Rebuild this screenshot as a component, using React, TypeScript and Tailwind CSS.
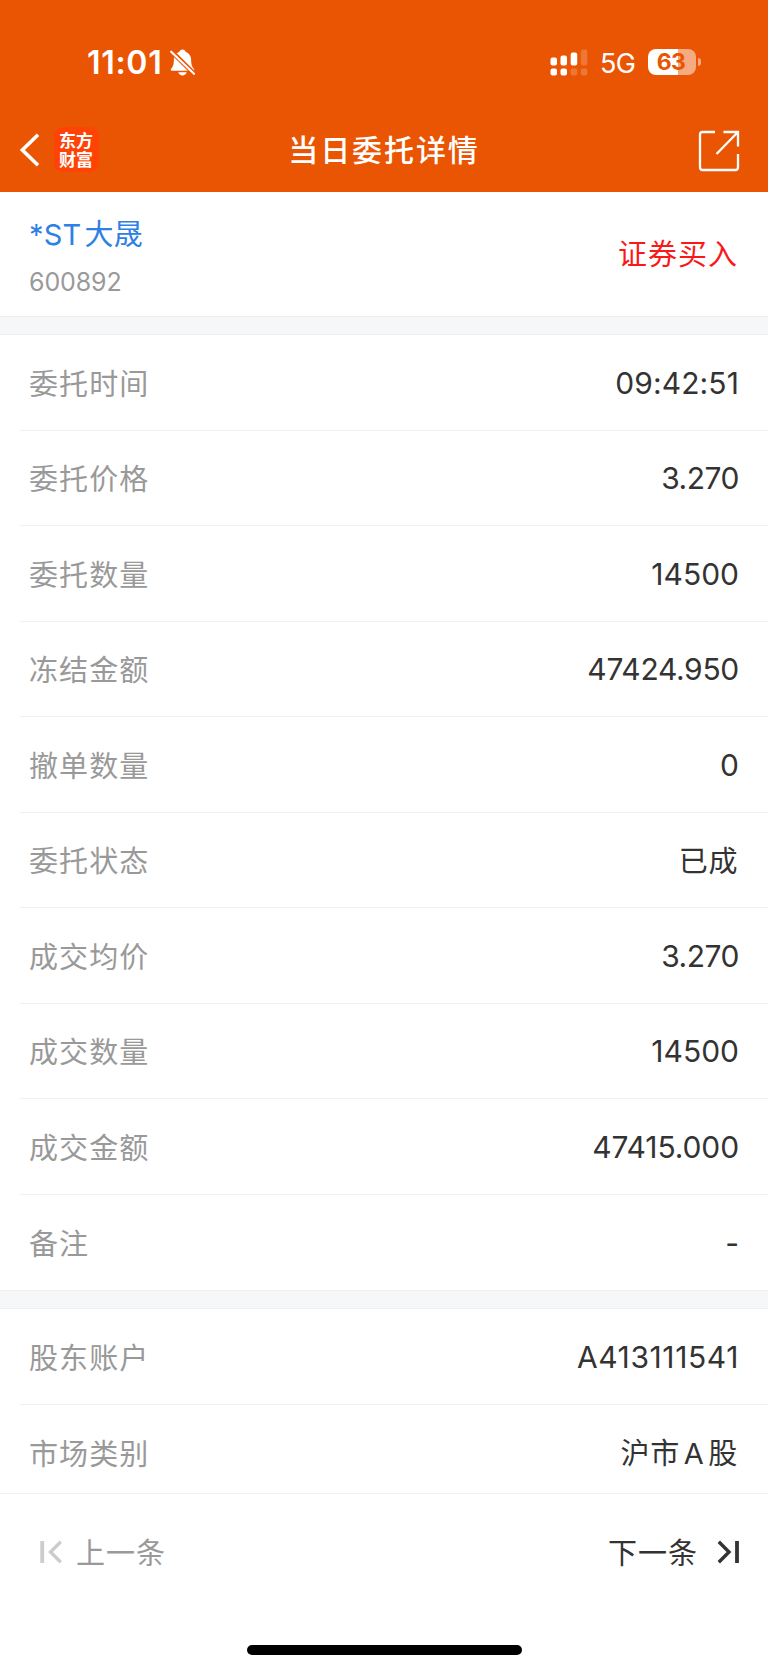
const CJK = 'font-["Inter","Noto_Sans_CJK_SC",sans-serif]';

type Detail = { label: string; value: string; spacing?: string };

const orderDetails: Detail[] = [
  { label: '委托时间', value: '09:42:51', spacing: 'tracking-[0.1px]' },
  { label: '委托价格', value: '3.270', spacing: 'tracking-[-0.5px]' },
  { label: '委托数量', value: '14500', spacing: 'tracking-[0px]' },
  { label: '冻结金额', value: '47424.950', spacing: 'tracking-[-0.3px]' },
  { label: '撤单数量', value: '0', spacing: 'tracking-[0px]' },
  { label: '委托状态', value: '已成', spacing: 'tracking-[0.6px]' },
  { label: '成交均价', value: '3.270', spacing: 'tracking-[-0.5px]' },
  { label: '成交数量', value: '14500', spacing: 'tracking-[0px]' },
  { label: '成交金额', value: '47415.000', spacing: 'tracking-[-0.1px]' },
  { label: '备注', value: '-' },
];

const accountDetails: Detail[] = [
  { label: '股东账户', value: 'A413111541', spacing: 'tracking-[0.6px]' },
  { label: '市场类别', value: '沪市 A 股', spacing: 'tracking-[0.7px]' },
];

function Row({ label, value, spacing = '', last }: Detail & { last?: boolean }) {
  const isCjk = /[\u4e00-\u9fff]/.test(value);
  return (
    <div className="h-[95.5px] shrink-0 pl-5">
      <div
        className={`flex h-full items-center justify-between pl-[9px] pt-[3px] leading-none ${
          isCjk ? 'pr-[30px]' : 'pr-[29px]'
        } ${last ? '' : 'border-b border-[#f0f0f1]'}`}
      >
        <span className="pt-px text-[29px] tracking-[1.1px] text-[#999999]">{label}</span>
        <span
          className={`text-[#333333] ${
            isCjk ? 'text-[29px] [word-spacing:-5px]' : 'pb-[2px] text-[30px]'
          } ${spacing}`}
        >
          {value}
        </span>
      </div>
    </div>
  );
}

function Divider() {
  return <div className="h-[19px] shrink-0 border-y border-[#efeff0] bg-[#f6f7f9]" />;
}

function SilentBell() {
  return (
    <svg width="25" height="27" viewBox="0 0 26 28" fill="none">
      <path
        d="M13 .5c-1.700 0-3 .9-3.400 2.500C5.800 4.300 4 7.700 4 11.500c0 5-.8 6.600-2.600 8.700C.3 21.600.6 22.500 2 22.500h22c1.400 0 1.700-.9.6-2.300-1.800-2.100-2.600-3.700-2.600-8.700 0-3.800-1.800-7.200-5.600-8.500C16 1.400 14.700.5 13 .5Z"
        fill="white"
      />
      <path d="M8.600 24.200h8.800c-.6 2-2.300 3.300-4.400 3.300s-3.800-1.300-4.400-3.300Z" fill="white" />
      <path d="M1.600 2.500 25.200 25.800" stroke="#ea5504" strokeWidth="5" />
      <path d="M1.200 2.700 25 25.800" stroke="white" strokeWidth="2.200" strokeLinecap="round" />
    </svg>
  );
}

function Signal() {
  return (
    <svg className="mt-px" width="38" height="28" viewBox="0 0 38 28" fill="white">
      <rect x="0.500" y="8.500" width="6.500" height="8" rx="2" />
      <rect x="10.500" y="6.500" width="6.500" height="10" rx="2" />
      <rect x="20.700" y="3.500" width="6.500" height="13" rx="2" />
      <rect x="30.800" y="0.500" width="6.500" height="16" rx="2" opacity=".2" />
      <rect x="0.500" y="19.500" width="6.500" height="7" rx="2" />
      <rect x="10.500" y="19.500" width="6.500" height="7" rx="2" />
      <rect x="20.700" y="19.500" width="6.500" height="7" rx="2" opacity=".2" />
      <rect x="30.800" y="19.500" width="6.500" height="7" rx="2" opacity=".2" />
    </svg>
  );
}

function Battery() {
  return (
    <div className="flex items-center gap-[2px]">
      <div className="flex h-[26px] w-[48px] items-center justify-center rounded-[8px] bg-linear-to-r from-white from-63% to-[#f5aa81] to-63% pr-[2px] pt-px text-[23px] font-bold leading-none tracking-[-0.6px] text-[#ea5504]">
        63
      </div>
      <div className="h-[8px] w-[3px] rounded-r-full bg-[#f5aa81]" />
    </div>
  );
}

function StatusBar() {
  return (
    <div className="flex h-[102px] items-start justify-between pl-[87px] pr-[67px] text-white">
      <div className="mt-[48px] flex h-[28px] items-center">
        <span className="w-[76px] whitespace-nowrap pt-[2px] text-[32px] font-semibold leading-none tracking-[0.7px]">
          11:01
        </span>
        <div className="ml-[7px] mt-[1px]">
          <SilentBell />
        </div>
      </div>
      <div className="mt-[48px] flex h-[28px] items-center">
        <Signal />
        <span className="ml-[12px] mr-[13px] mt-[2px] w-[35px] whitespace-nowrap text-[27px] leading-none tracking-[-0.6px]">
          5G
        </span>
        <Battery />
      </div>
    </div>
  );
}

function NavBar() {
  return (
    <div className="grid h-[90px] grid-cols-[1fr_auto_1fr] items-center pl-[20px] pr-[28px] text-white">
      <div className="flex items-center pt-[5px]">
        <svg width="20" height="34" viewBox="0 0 20 34" fill="none">
          <path d="M18 1.800 2.400 17 18 32.200" stroke="white" strokeWidth="3.600" />
        </svg>
        <div className="ml-[14px] flex h-[45px] w-[45px] flex-col items-center justify-center rounded-[9px] bg-[#ff4305] pb-[2px] pr-px font-['Noto_Sans_CJK_SC',sans-serif] text-[17px] font-bold leading-[19px]">
          <span>东方</span>
          <span>财富</span>
        </div>
      </div>
      <h1 className="pl-[8px] pt-[6px] text-[30px] font-medium leading-none tracking-[1.900px]">当日委托详情</h1>
      <div className="flex justify-end pt-[7px]">
        <svg width="42" height="42" viewBox="0 0 42 42" fill="none" stroke="white" strokeWidth="2.300">
          <path d="M17 2H4.500Q2 2 2 4.500V37Q2 40 4.500 40H37.500Q40 40 40 37V24" />
          <path d="M25.500 2H40V16.500M39.500 2.500 18.500 24" />
        </svg>
      </div>
    </div>
  );
}

export default function App() {
  return (
    <div className={`flex h-[1670px] w-[768px] flex-col overflow-hidden bg-white ${CJK}`}>
      <header className="h-[192px] shrink-0 bg-[#ea5504]">
        <StatusBar />
        <NavBar />
      </header>

      <section className="flex h-[124px] shrink-0 items-center justify-between pl-[29px] pr-[30px] leading-none">
        <div className="flex flex-col pt-[6px]">
          <span className="text-[29px] tracking-[0.200px] text-[#2f80e4]">
            *ST<span className="ml-[3px]">大晟</span>
          </span>
          <span className="mt-[21px] text-[25px] tracking-[-0.1px] text-[#999999]">600892</span>
        </div>
        <span className="text-[29px] tracking-[1px] text-[#fa1919]">证券买入</span>
      </section>

      <Divider />
      {orderDetails.map((d, i) => (
        <Row key={d.label} {...d} last={i === orderDetails.length - 1} />
      ))}
      <Divider />
      <div className="h-[184px] shrink-0 overflow-hidden">
        {accountDetails.map((d, i) => (
          <Row key={d.label} {...d} last={i === accountDetails.length - 1} />
        ))}
      </div>

      <footer className="flex grow flex-col items-center border-t border-[#f2f2f3]">
        <div className="flex h-[118px] w-full items-center justify-between pl-[39px] pr-[28px] text-[29px] leading-none tracking-[1px]">
          <div className="flex items-center text-[#999999]">
            <svg className="mb-[2px]" width="23" height="24" viewBox="0 0 23 24" fill="none" stroke="#cccccc">
              <path d="M3.200 1V23" strokeWidth="3.800" />
              <path d="M21.800 1.800 11.500 12 21.800 22.200" strokeWidth="3.400" />
            </svg>
            <span className="ml-[14px]">上一条</span>
          </div>
          <div className="flex items-center text-[#333333]">
            <span>下一条</span>
            <svg className="mb-[2px] ml-[19px]" width="23" height="24" viewBox="0 0 23 24" fill="none" stroke="#333333">
              <path d="M20 1V23" strokeWidth="3.800" />
              <path d="M1.800 1.800 12 12 1.800 22.200" strokeWidth="3.400" />
            </svg>
          </div>
        </div>
        <div className="mt-[33px] h-[10px] w-[275px] rounded-full bg-black" />
      </footer>
    </div>
  );
}
